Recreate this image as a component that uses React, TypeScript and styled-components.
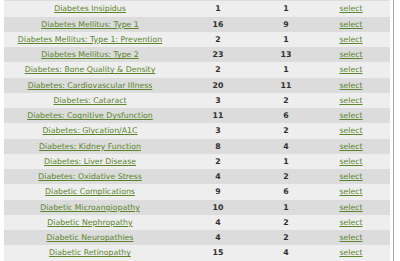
import React from 'react';
import styled, { createGlobalStyle } from 'styled-components';

interface Topic {
  name: string;
  studies: number;
  papers: number;
}

const topics: Topic[] = [
  { name: 'Diabetes Insipidus', studies: 1, papers: 1 },
  { name: 'Diabetes Mellitus: Type 1', studies: 16, papers: 9 },
  { name: 'Diabetes Mellitus: Type 1: Prevention', studies: 2, papers: 1 },
  { name: 'Diabetes Mellitus: Type 2', studies: 23, papers: 13 },
  { name: 'Diabetes: Bone Quality & Density', studies: 2, papers: 1 },
  { name: 'Diabetes: Cardiovascular Illness', studies: 20, papers: 11 },
  { name: 'Diabetes: Cataract', studies: 3, papers: 2 },
  { name: 'Diabetes: Cognitive Dysfunction', studies: 11, papers: 6 },
  { name: 'Diabetes: Glycation/A1C', studies: 3, papers: 2 },
  { name: 'Diabetes: Kidney Function', studies: 8, papers: 4 },
  { name: 'Diabetes: Liver Disease', studies: 2, papers: 1 },
  { name: 'Diabetes: Oxidative Stress', studies: 4, papers: 2 },
  { name: 'Diabetic Complications', studies: 9, papers: 6 },
  { name: 'Diabetic Microangiopathy', studies: 10, papers: 1 },
  { name: 'Diabetic Nephropathy', studies: 4, papers: 2 },
  { name: 'Diabetic Neuropathies', studies: 4, papers: 2 },
  { name: 'Diabetic Retinopathy', studies: 15, papers: 4 },
];

const GlobalStyle = createGlobalStyle`
  html, body {
    margin: 0;
    padding: 0;
    background: #fff;
    overflow: hidden;
  }
`;

const Page = styled.div`
  width: 400px;
  height: 261px;
  overflow: hidden;
`;

const Panel = styled.div`
  width: 386px;
  padding: 0 3px 0 4px;
  border-right: 1px solid #a8a8a8;
  font-family: 'DejaVu Sans', Verdana, sans-serif;
  font-size: 7.8px;
`;

// tail of the row scrolled just above / below the visible area
const RowEdge = styled.div`
  height: 1.25px;
  background: #dcdcdc;
`;

const Row = styled.div<{ $shade: boolean }>`
  display: grid;
  grid-template-columns: 172px 84px 52px 78px;
  height: 15.25px;
  align-items: center;
  background: ${(p) => (p.$shade ? '#dcdcdc' : '#eeeeee')};
`;

const Cell = styled.div`
  text-align: center;
  white-space: nowrap;
`;

const Count = styled(Cell)`
  color: #2e2e2e;
  font-weight: bold;
`;

const Link = styled.a`
  color: #5a852b;
  text-decoration: underline;
  cursor: pointer;
`;

export default function App() {
  return (
    <Page>
      <GlobalStyle />
      <Panel>
        <RowEdge />
        {topics.map((t, i) => (
          <Row key={t.name} $shade={i % 2 === 1}>
            <Cell><Link>{t.name}</Link></Cell>
            <Count>{t.studies}</Count>
            <Count>{t.papers}</Count>
            <Cell><Link>select</Link></Cell>
          </Row>
        ))}
        <RowEdge />
      </Panel>
    </Page>
  );
}
